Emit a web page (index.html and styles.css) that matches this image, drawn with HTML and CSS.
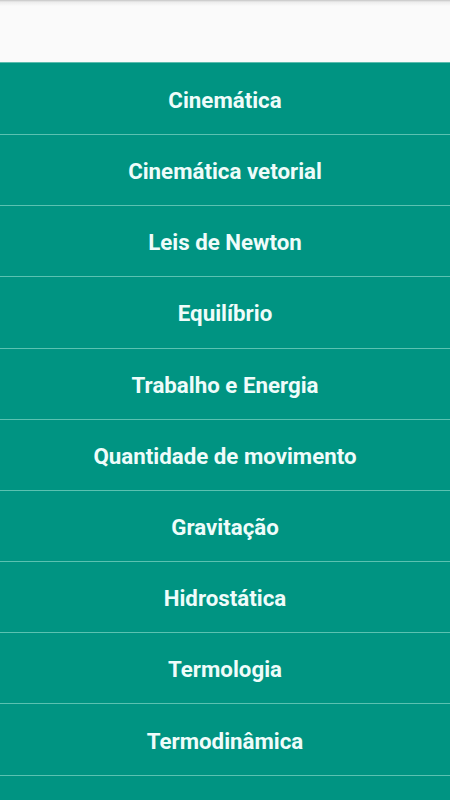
FILE: index.html
```html
<!DOCTYPE html>
<html>
<head>
    <title>Física</title>
    <link rel="stylesheet" href="styles.css">
</head>
<body>
    <!-- Barra superior -->
    <div class="topbar"></div>

    <!-- Lista de assuntos -->
    <div class="lista">
        <div class="item">Cinemática</div>
        <div class="item">Cinemática vetorial</div>
        <div class="item">Leis de Newton</div>
        <div class="item">Equilíbrio</div>
        <div class="item">Trabalho e Energia</div>
        <div class="item">Quantidade de movimento</div>
        <div class="item">Gravitação</div>
        <div class="item">Hidrostática</div>
        <div class="item">Termologia</div>
        <div class="item">Termodinâmica</div>
        <div class="item"></div>
    </div>
</body>
</html>
```

FILE: styles.css
```css
html, body {
    height: 100%;
    overflow: hidden;
}
body {
    background-color: #009482;
    font-family: Roboto, "Noto Sans", sans-serif;
    margin: 0;
    padding: 0;
}
.topbar {
    height: 62px;
    background: linear-gradient(#c4c4c4, #ececec 2px, #fafafa 6px);
    border-bottom: 1px solid #5cbcae;
}
.lista {
    display: flex;
    flex-direction: column;
    padding-top: 0.8px;
}
.item {
    height: 71.2px;
    box-sizing: border-box;
    border-bottom: 1px solid #5ac2b1;
    display: flex;
    align-items: center;
    justify-content: center;
    color: #effcfa;
    font-size: 22.3px;
    font-weight: bold;
    padding-top: 2px;
    flex-shrink: 0;
}
```
